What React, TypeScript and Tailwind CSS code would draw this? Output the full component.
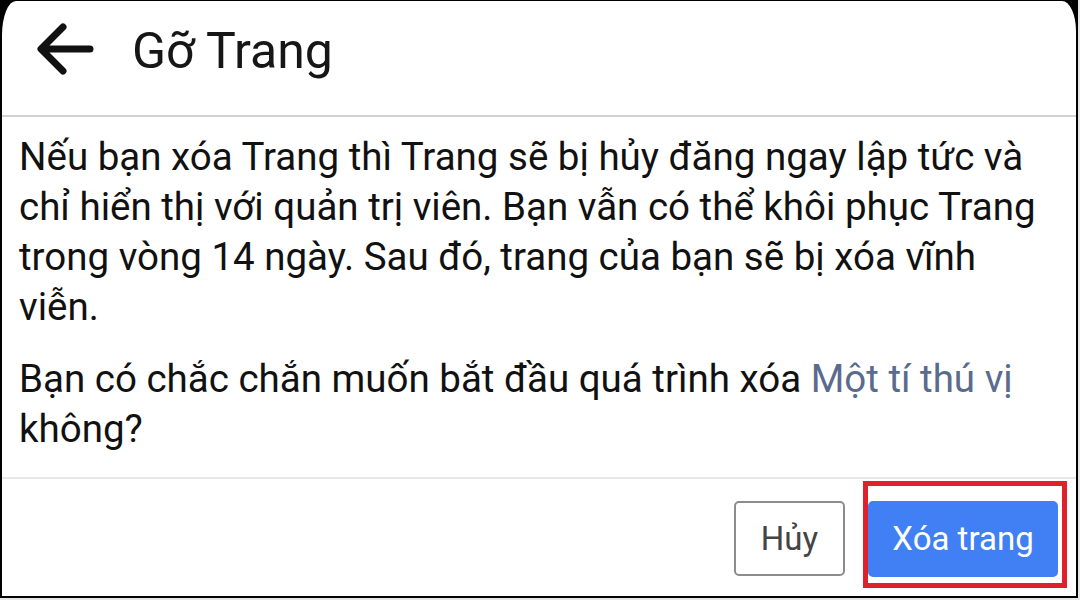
import React from "react";

const BackArrow = () => (
  <svg width="58" height="52" viewBox="0 0 58 52" fill="none" className="shrink-0">
    <path
      d="M54 26H6M27 4L5 26L27 48"
      stroke="#111"
      strokeWidth="7"
      strokeLinecap="round"
      strokeLinejoin="round"
    />
  </svg>
);

const App = () => {
  return (
    <div className="w-[1080px] h-[600px] bg-[#e6e6e6] font-['Roboto',sans-serif]">
      <div className="w-[1078px] h-[598px] bg-black pl-[2px] pt-[1px] pr-[2px] pb-[2px]">
        <div className="h-full flex flex-col bg-white rounded-tl-[14px_34px] rounded-tr-[14px_30px]">
          {/* Header */}
          <div className="h-[116px] shrink-0 flex items-start pt-[22px] pl-[34px] gap-[38px] border-b-2 border-[#d2d2d2]">
            <BackArrow />
            <h1 className="text-[50px] leading-none text-[#161616] mt-[3px]">Gỡ Trang</h1>
          </div>

          {/* Body */}
          <div className="flex-1 pl-[17px] pr-[26px] pt-[15px] text-[38.5px] leading-[50px] text-[#111]">
            <p>
              Nếu bạn xóa Trang thì Trang sẽ bị hủy đăng ngay lập tức và chỉ hiển thị với quản trị
              viên. Bạn vẫn có thể khôi phục Trang trong vòng 14 ngày. Sau đó, trang của bạn sẽ bị
              xóa vĩnh viễn.
            </p>
            <p className="mt-[22px]">
              Bạn có chắc chắn muốn bắt đầu quá trình xóa{" "}
              <span className="text-[#5a6b8e]">Một tí thú vị</span> không?
            </p>
          </div>

          {/* Footer */}
          <div className="h-[119px] shrink-0 border-t-2 border-[#e8e8e8] flex justify-end items-start pt-[22px] pr-[18px] gap-[23px]">
            <button className="w-[111px] h-[75px] rounded-[5px] border-2 border-[#8c8c8c] bg-white text-[33px] text-[#444]">
              Hủy
            </button>
            <div className="relative">
              <button className="w-[190px] h-[76px] rounded-[5px] bg-[#4080f4] text-[33px] text-white">
                Xóa trang
              </button>
              <div className="absolute -top-[20px] -left-[5px] -right-[9px] -bottom-[11px] border-[5px] border-[#e0202a] pointer-events-none" />
            </div>
          </div>
        </div>
      </div>
    </div>
  );
};

export default App;
